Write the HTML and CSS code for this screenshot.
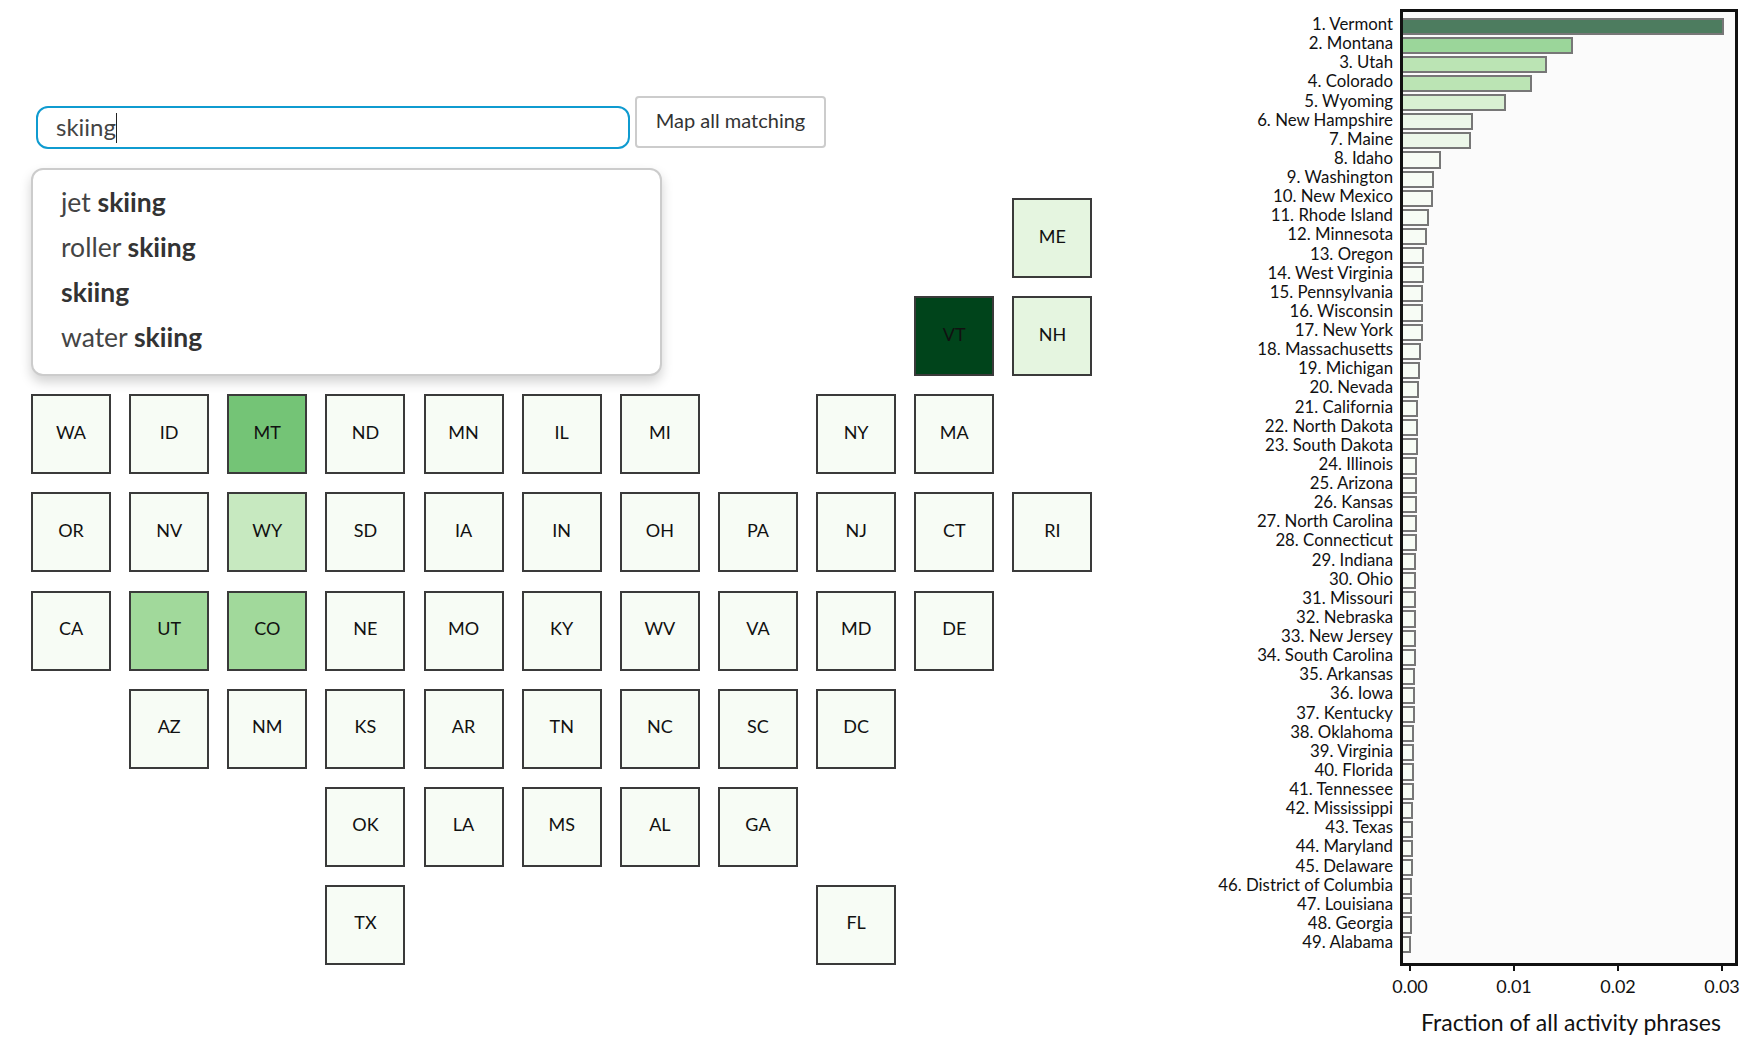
FILE: index.html
```html
<!DOCTYPE html>
<html lang="en">
<head>
    <meta charset="UTF-8">
    <meta name="viewport" content="width=device-width, initial-scale=1.0">
    <title>Activity phrases by state</title>
    <link rel="stylesheet" href="styles.css">
</head>
<body>
    <div class="left">
        <div class="search">
            <div class="search-input">skiing<span class="caret"></span></div>
            <button class="map-btn" type="button">Map all matching</button>
            <ul class="suggestions">
                <li>jet <b>skiing</b></li>
                <li>roller <b>skiing</b></li>
                <li><b>skiing</b></li>
                <li>water <b>skiing</b></li>
            </ul>
        </div>

        <div class="tiles">
            <div class="tile r0 c10 g2">ME</div>
            <div class="tile r1 c5">WI</div>
            <div class="tile r1 c9 g5">VT</div>
            <div class="tile r1 c10 g2">NH</div>

            <div class="tile r2 c0">WA</div>
            <div class="tile r2 c1">ID</div>
            <div class="tile r2 c2 g4">MT</div>
            <div class="tile r2 c3">ND</div>
            <div class="tile r2 c4">MN</div>
            <div class="tile r2 c5">IL</div>
            <div class="tile r2 c6">MI</div>
            <div class="tile r2 c8">NY</div>
            <div class="tile r2 c9">MA</div>

            <div class="tile r3 c0">OR</div>
            <div class="tile r3 c1">NV</div>
            <div class="tile r3 c2 g1">WY</div>
            <div class="tile r3 c3">SD</div>
            <div class="tile r3 c4">IA</div>
            <div class="tile r3 c5">IN</div>
            <div class="tile r3 c6">OH</div>
            <div class="tile r3 c7">PA</div>
            <div class="tile r3 c8">NJ</div>
            <div class="tile r3 c9">CT</div>
            <div class="tile r3 c10">RI</div>

            <div class="tile r4 c0">CA</div>
            <div class="tile r4 c1 g3">UT</div>
            <div class="tile r4 c2 g3">CO</div>
            <div class="tile r4 c3">NE</div>
            <div class="tile r4 c4">MO</div>
            <div class="tile r4 c5">KY</div>
            <div class="tile r4 c6">WV</div>
            <div class="tile r4 c7">VA</div>
            <div class="tile r4 c8">MD</div>
            <div class="tile r4 c9">DE</div>

            <div class="tile r5 c1">AZ</div>
            <div class="tile r5 c2">NM</div>
            <div class="tile r5 c3">KS</div>
            <div class="tile r5 c4">AR</div>
            <div class="tile r5 c5">TN</div>
            <div class="tile r5 c6">NC</div>
            <div class="tile r5 c7">SC</div>
            <div class="tile r5 c8">DC</div>

            <div class="tile r6 c3">OK</div>
            <div class="tile r6 c4">LA</div>
            <div class="tile r6 c5">MS</div>
            <div class="tile r6 c6">AL</div>
            <div class="tile r6 c7">GA</div>

            <div class="tile r7 c3">TX</div>
            <div class="tile r7 c8">FL</div>
        </div>
    </div>

    <div class="chart">
        <div class="chart-body">
            <ol class="labels">
                <li>1. Vermont</li>
                <li>2. Montana</li>
                <li>3. Utah</li>
                <li>4. Colorado</li>
                <li>5. Wyoming</li>
                <li>6. New Hampshire</li>
                <li>7. Maine</li>
                <li>8. Idaho</li>
                <li>9. Washington</li>
                <li>10. New Mexico</li>
                <li>11. Rhode Island</li>
                <li>12. Minnesota</li>
                <li>13. Oregon</li>
                <li>14. West Virginia</li>
                <li>15. Pennsylvania</li>
                <li>16. Wisconsin</li>
                <li>17. New York</li>
                <li>18. Massachusetts</li>
                <li>19. Michigan</li>
                <li>20. Nevada</li>
                <li>21. California</li>
                <li>22. North Dakota</li>
                <li>23. South Dakota</li>
                <li>24. Illinois</li>
                <li>25. Arizona</li>
                <li>26. Kansas</li>
                <li>27. North Carolina</li>
                <li>28. Connecticut</li>
                <li>29. Indiana</li>
                <li>30. Ohio</li>
                <li>31. Missouri</li>
                <li>32. Nebraska</li>
                <li>33. New Jersey</li>
                <li>34. South Carolina</li>
                <li>35. Arkansas</li>
                <li>36. Iowa</li>
                <li>37. Kentucky</li>
                <li>38. Oklahoma</li>
                <li>39. Virginia</li>
                <li>40. Florida</li>
                <li>41. Tennessee</li>
                <li>42. Mississippi</li>
                <li>43. Texas</li>
                <li>44. Maryland</li>
                <li>45. Delaware</li>
                <li>46. District of Columbia</li>
                <li>47. Louisiana</li>
                <li>48. Georgia</li>
                <li>49. Alabama</li>
            </ol>
            <div class="plot">
                <div class="bar b5" style="width: 321px"></div>
                <div class="bar b4" style="width: 170px"></div>
                <div class="bar b3" style="width: 144px"></div>
                <div class="bar b3" style="width: 129px"></div>
                <div class="bar b2" style="width: 103px"></div>
                <div class="bar b1" style="width: 70px"></div>
                <div class="bar b1" style="width: 68px"></div>
                <div class="bar" style="width: 38px"></div>
                <div class="bar" style="width: 31px"></div>
                <div class="bar" style="width: 30px"></div>
                <div class="bar" style="width: 26px"></div>
                <div class="bar" style="width: 24px"></div>
                <div class="bar" style="width: 21px"></div>
                <div class="bar" style="width: 21px"></div>
                <div class="bar" style="width: 20px"></div>
                <div class="bar" style="width: 20px"></div>
                <div class="bar" style="width: 20px"></div>
                <div class="bar" style="width: 18px"></div>
                <div class="bar" style="width: 17px"></div>
                <div class="bar" style="width: 16px"></div>
                <div class="bar" style="width: 15px"></div>
                <div class="bar" style="width: 15px"></div>
                <div class="bar" style="width: 15px"></div>
                <div class="bar" style="width: 14px"></div>
                <div class="bar" style="width: 14px"></div>
                <div class="bar" style="width: 14px"></div>
                <div class="bar" style="width: 14px"></div>
                <div class="bar" style="width: 14px"></div>
                <div class="bar" style="width: 13px"></div>
                <div class="bar" style="width: 13px"></div>
                <div class="bar" style="width: 13px"></div>
                <div class="bar" style="width: 13px"></div>
                <div class="bar" style="width: 13px"></div>
                <div class="bar" style="width: 13px"></div>
                <div class="bar" style="width: 12px"></div>
                <div class="bar" style="width: 12px"></div>
                <div class="bar" style="width: 12px"></div>
                <div class="bar" style="width: 11px"></div>
                <div class="bar" style="width: 11px"></div>
                <div class="bar" style="width: 11px"></div>
                <div class="bar" style="width: 11px"></div>
                <div class="bar" style="width: 10px"></div>
                <div class="bar" style="width: 10px"></div>
                <div class="bar" style="width: 10px"></div>
                <div class="bar" style="width: 10px"></div>
                <div class="bar" style="width: 9px"></div>
                <div class="bar" style="width: 9px"></div>
                <div class="bar" style="width: 9px"></div>
                <div class="bar" style="width: 8px"></div>
            </div>
        </div>
        <div class="axis">
            <div class="tick">0.00</div>
            <div class="tick">0.01</div>
            <div class="tick">0.02</div>
            <div class="tick">0.03</div>
        </div>
        <div class="axis-title">Fraction of all activity phrases</div>
    </div>
</body>
</html>
```

FILE: styles.css
```css
* {
    margin: 0;
    padding: 0;
    box-sizing: border-box;
}
body {
    background: #fff;
    color: #333;
    font-family: 'Lato', 'Noto Sans', sans-serif;
    display: flex;
    height: 1064px;
    overflow: hidden;
}

/* left side */
.left {
    width: 1400px;
    padding: 96px 0 0 31px;
}
.search {
    position: relative;
    display: flex;
    align-items: flex-start;
    gap: 5px;
    height: 53px;
}
.search-input {
    width: 594px;
    height: 43px;
    margin: 10px 0 0 5px;
    padding-left: 18px;
    border: 2px solid #0f9bd0;
    border-radius: 12px;
    font-size: 24px;
    line-height: 38px;
    color: #444;
}
.caret {
    display: inline-block;
    width: 1px;
    height: 30px;
    background: #222;
    vertical-align: -7px;
}
.map-btn {
    width: 191px;
    height: 52px;
    padding-bottom: 4px;
    background: #fff;
    border: 2px solid #ccc;
    border-radius: 4px;
    color: #333;
    font-family: inherit;
    font-size: 20px;
}
.suggestions {
    position: absolute;
    left: 0;
    top: 72px;
    z-index: 2;
    width: 631px;
    height: 208px;
    padding: 10px 0 0 28px;
    list-style: none;
    background: #fff;
    border: 2px solid #ccc;
    border-radius: 12px;
    box-shadow: 0 6px 12px rgba(0, 0, 0, 0.18);
    font-size: 26.5px;
    color: #444;
}
.suggestions li {
    height: 45px;
    line-height: 45px;
}
.suggestions b {
    color: #333;
}

/* tile map */
.tiles {
    display: grid;
    grid-template-columns: repeat(11, 80px);
    grid-template-rows: repeat(8, 80px);
    gap: 18.15px;
    margin-top: 49px;
}
.tile {
    display: flex;
    align-items: center;
    justify-content: center;
    padding-bottom: 5px;
    background: #f7fcf5;
    border: 2px solid #3a3a3a;
    color: #111;
    font-size: 18px;
}
.g1 { background: #c7e9c0; }
.g2 { background: #e5f5e0; }
.g3 { background: #a1d99b; }
.g4 { background: #74c476; }
.g5 { background: #00441b; }

.r0 { grid-row: 1; }
.r1 { grid-row: 2; }
.r2 { grid-row: 3; }
.r3 { grid-row: 4; }
.r4 { grid-row: 5; }
.r5 { grid-row: 6; }
.r6 { grid-row: 7; }
.r7 { grid-row: 8; }
.c0 { grid-column: 1; }
.c1 { grid-column: 2; }
.c2 { grid-column: 3; }
.c3 { grid-column: 4; }
.c4 { grid-column: 5; }
.c5 { grid-column: 6; }
.c6 { grid-column: 7; }
.c7 { grid-column: 8; }
.c8 { grid-column: 9; }
.c9 { grid-column: 10; }
.c10 { grid-column: 11; }

/* bar chart */
.chart {
    width: 352px;
    padding-top: 9px;
    color: #111;
    position: relative;
}
.chart-body {
    display: flex;
    height: 957px;
}
.labels {
    position: absolute;
    top: 14px;
    right: 359px;
    width: 300px;
    list-style: none;
    text-align: right;
    font-size: 16.8px;
    white-space: nowrap;
}
.labels li {
    height: 19.13px;
    line-height: 19.13px;
}
.plot {
    width: 338px;
    height: 957px;
    padding-top: 5.5px;
    background: #fbfbfb;
    border: 3px solid #111;
}
.bar {
    height: 17.13px;
    margin-bottom: 2px;
    background: #f7fcf5;
    border: 2px solid #777;
    border-left-width: 0;
}
.b1 { background: #ecf7e9; }
.b2 { background: #d9f0d3; }
.b3 { background: #bbe4b4; }
.b4 { background: #9bd69a; }
.b5 { background: #4d7c5f; }

/* first tick sits 9.5px inside the plot */
.axis {
    display: flex;
    margin-left: -42px;
}
.tick {
    flex: none;
    width: 104px;
    padding-top: 8px;
    position: relative;
    text-align: center;
    font-size: 18px;
    line-height: 24px;
}
.tick::before {
    content: "";
    position: absolute;
    top: 0;
    left: 51px;
    width: 2px;
    height: 5px;
    background: #111;
}
.axis-title {
    width: 338px;
    margin-top: 9px;
    padding-left: 21px;
    font-size: 23px;
    line-height: 30px;
    white-space: nowrap;
}
```
